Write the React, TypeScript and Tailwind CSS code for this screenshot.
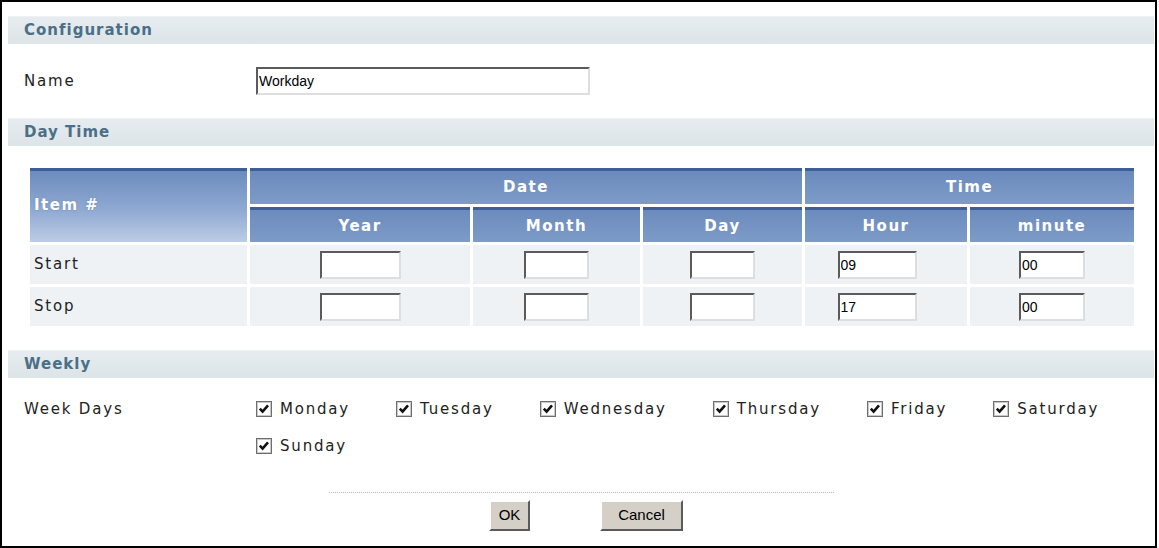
import React from 'react';

const headBg =
  'bg-[linear-gradient(to_bottom,#3d5e97_0px,#3d5e97_3px,#6b8bbd_3px,#7e9bc8_100%)]';
const itemBg =
  'bg-[linear-gradient(to_bottom,#3d5e97_0px,#3d5e97_3px,#6c8cbe_3px,#8ea8d1_55%,#bccce5_100%)]';

const SectionBar = ({ title }: { title: string }) => (
  <div className="h-[28px] flex items-center pl-[16px] bg-[linear-gradient(to_bottom,#e6ecef,#dde4e8)] border-t border-[#eef2f4]">
    <span className="text-[15px] font-bold tracking-[1px] text-[#4b6f87]">{title}</span>
  </div>
);

const TextInput = ({ value = '', className = '' }: { value?: string; className?: string }) => (
  <input
    readOnly
    value={value}
    className={`h-[28px] bg-white border-2 border-t-[#5b5b5b] border-l-[#5b5b5b] border-b-[#dedede] border-r-[#dedede] px-[1px] text-[14px] text-black font-['Liberation_Sans',Arial,sans-serif] tracking-normal outline-none ${className}`}
  />
);

const Check = ({ label }: { label: string }) => (
  <div className="flex items-center gap-[8px] h-[22px]">
    <svg width="16" height="16" viewBox="0 0 16 16" className="shrink-0">
      <rect x="0.5" y="0.5" width="15" height="15" fill="#fff" stroke="#6e6e6e" />
      <rect x="1.5" y="1.5" width="13" height="13" fill="none" stroke="#c8c8c8" />
      <path d="M3.8 7.6 L6.6 10.6 L12 4.4" fill="none" stroke="#111" strokeWidth="2.6" />
    </svg>
    <span>{label}</span>
  </div>
);

const Button = ({ label, className = '' }: { label: string; className?: string }) => (
  <button
    className={`h-[31px] bg-[#d4d0c8] border-2 border-t-white border-l-white border-b-[#5a5a5a] border-r-[#5a5a5a] text-[15px] text-black font-['Liberation_Sans',Arial,sans-serif] tracking-normal ${className}`}
  >
    {label}
  </button>
);

const rows = [
  { name: 'Start', hour: '09', minute: '00' },
  { name: 'Stop', hour: '17', minute: '00' },
];

const days = ['Monday', 'Tuesday', 'Wednesday', 'Thursday', 'Friday', 'Saturday', 'Sunday'];

export default function App() {
  return (
    <div className="w-[1157px] h-[548px] border-2 border-black bg-white pl-[6px] pr-[1px] pt-[14px] font-['DejaVu_Sans',Verdana,sans-serif] text-[15px] tracking-[1.8px] text-[#222]">
      {/* Configuration */}
      <SectionBar title="Configuration" />
      <div className="mt-[24px] flex items-center h-[26px]">
        <div className="w-[248px] pl-[16px]">Name</div>
        <TextInput value="Workday" className="w-[334px] h-[26px]" />
      </div>

      {/* Day Time */}
      <div className="mt-[24px]">
        <SectionBar title="Day Time" />
      </div>
      <div className="mt-[22px] ml-[22px] grid grid-cols-[217px_220px_167px_159px_162px_164px] grid-rows-[36px_35px_39px_39px] gap-[3px] w-[1104px]">
        <div className={`row-span-2 ${itemBg} flex items-center pl-[4px] text-white font-bold tracking-[1.5px] [text-shadow:0_0_2px_#6b86b3]`}>
          Item #
        </div>
        <div className={`col-span-3 ${headBg} flex items-center justify-center pt-[3px] text-white font-bold tracking-[1.5px]`}>
          Date
        </div>
        <div className={`col-span-2 ${headBg} flex items-center justify-center pt-[3px] text-white font-bold tracking-[1.5px]`}>
          Time
        </div>
        {['Year', 'Month', 'Day', 'Hour', 'minute'].map((h) => (
          <div key={h} className={`${headBg} flex items-center justify-center pt-[3px] text-white font-bold tracking-[1.5px]`}>
            {h}
          </div>
        ))}
        {rows.map((r) => (
          <React.Fragment key={r.name}>
            <div className="bg-[#eef2f5] flex items-center pl-[4px]">{r.name}</div>
            <div className="bg-[#eef2f5] flex items-center justify-center">
              <TextInput className="w-[81px]" />
            </div>
            <div className="bg-[#eef2f5] flex items-center justify-center">
              <TextInput className="w-[65px]" />
            </div>
            <div className="bg-[#eef2f5] flex items-center justify-center">
              <TextInput className="w-[65px]" />
            </div>
            <div className="bg-[#eef2f5] flex items-center justify-center pr-[18px]">
              <TextInput value={r.hour} className="w-[79px]" />
            </div>
            <div className="bg-[#eef2f5] flex items-center justify-center">
              <TextInput value={r.minute} className="w-[66px]" />
            </div>
          </React.Fragment>
        ))}
      </div>

      {/* Weekly */}
      <div className="mt-[24px]">
        <SectionBar title="Weekly" />
      </div>
      <div className="mt-[20px] flex items-start">
        <div className="w-[248px] pl-[16px] h-[22px] flex items-center">Week Days</div>
        <div className="flex-1 flex flex-wrap gap-x-[46px] gap-y-[15px]">
          {days.map((d) => (
            <Check key={d} label={d} />
          ))}
        </div>
      </div>

      {/* Actions */}
      <div className="mt-[35px] mx-auto w-[505px] border-t border-dotted border-[#b8b8b8]" />
      <div className="mt-[7px] flex justify-center gap-[70px] pl-[10px]">
        <Button label="OK" className="w-[41px]" />
        <Button label="Cancel" className="w-[83px]" />
      </div>
    </div>
  );
}
